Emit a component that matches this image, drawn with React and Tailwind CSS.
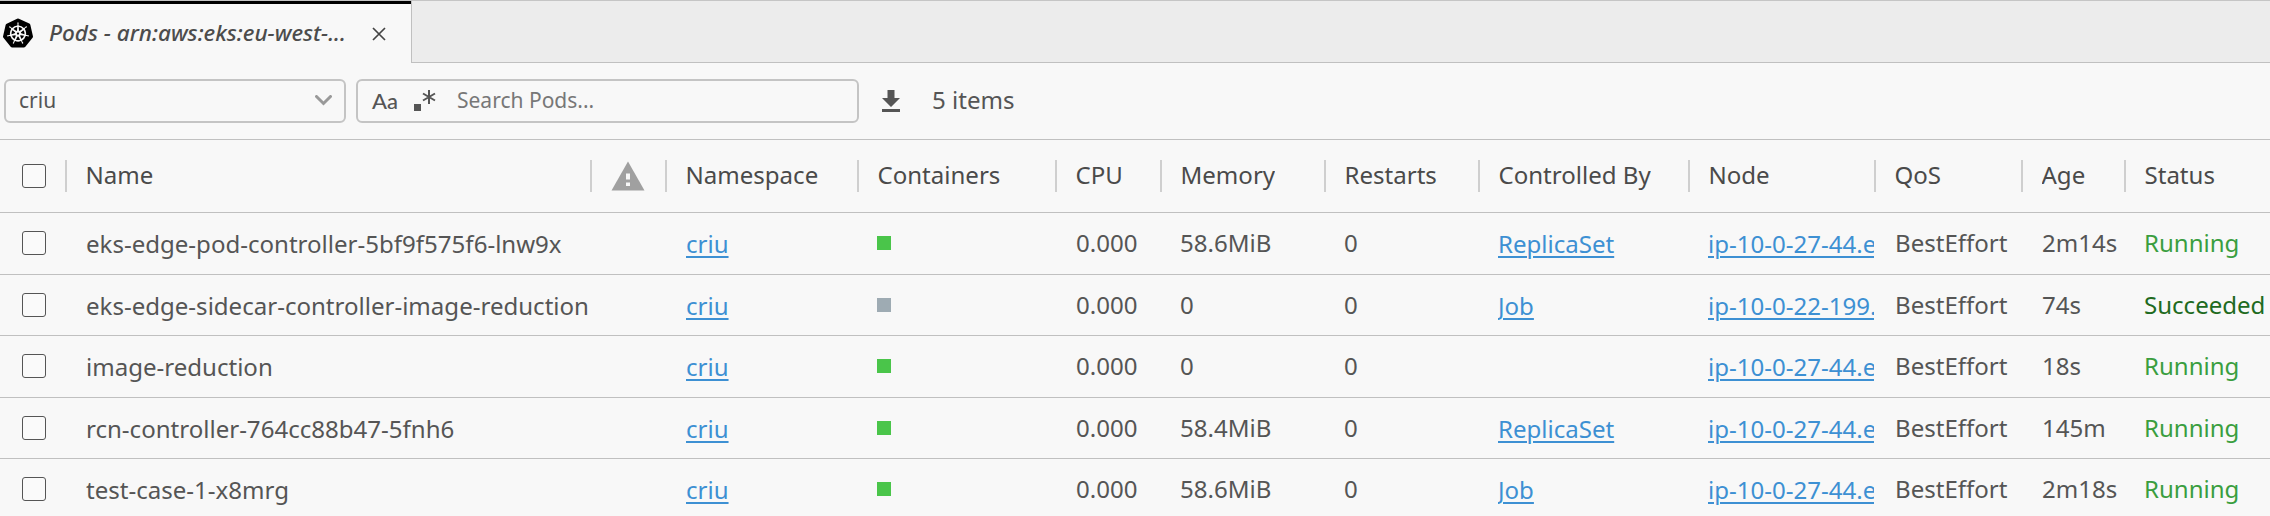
import React from "react";
import { SiKubernetes } from "react-icons/si";

const cell = "shrink-0 overflow-hidden whitespace-nowrap";

const GREEN = "bg-[#4ac54a]";
const GREY = "bg-[#9eabb3]";

const rows = [
  { name: "eks-edge-pod-controller-5bf9f575f6-lnw9x", dot: GREEN, mem: "58.6MiB", ctrl: "ReplicaSet", node: "ip-10-0-27-44.e", age: "2m14s", status: "Running" },
  { name: "eks-edge-sidecar-controller-image-reduction", dot: GREY, mem: "0", ctrl: "Job", node: "ip-10-0-22-199.", age: "74s", status: "Succeeded" },
  { name: "image-reduction", dot: GREEN, mem: "0", ctrl: "", node: "ip-10-0-27-44.e", age: "18s", status: "Running" },
  { name: "rcn-controller-764cc88b47-5fnh6", dot: GREEN, mem: "58.4MiB", ctrl: "ReplicaSet", node: "ip-10-0-27-44.e", age: "145m", status: "Running" },
  { name: "test-case-1-x8mrg", dot: GREEN, mem: "58.6MiB", ctrl: "Job", node: "ip-10-0-27-44.e", age: "2m18s", status: "Running" },
];

const headers = [
  { label: "Name", width: "w-[525px]" },
  { label: "warning", width: "w-[75px]" },
  { label: "Namespace", width: "w-[192px]" },
  { label: "Containers", width: "w-[198px]" },
  { label: "CPU", width: "w-[105px]" },
  { label: "Memory", width: "w-[164px]" },
  { label: "Restarts", width: "w-[154px]" },
  { label: "Controlled By", width: "w-[210px]", text: "w-[152px]" },
  { label: "Node", width: "w-[186px]" },
  { label: "QoS", width: "w-[147px]" },
  { label: "Age", width: "w-[103px]" },
  { label: "Status", width: "w-[145px]" },
];

function Checkbox() {
  return <span className="ml-[22px] h-6 w-6 shrink-0 rounded-[3px] border border-[#555] bg-[#fafafa]" />;
}

function Link({ children }) {
  return <a className="text-[#3d90d3] underline decoration-2 underline-offset-[3px]">{children}</a>;
}

function WarningIcon() {
  return (
    <svg className="shrink-0" width="34" height="30" viewBox="0 0 34 30">
      <path d="M17 0.5L33.5 29.5H0.5z" fill="#a0a0a0" />
      <path d="M15 12.5h4v6h-4zM15 21.5h4v3.5h-4z" fill="#f8f8f8" />
    </svg>
  );
}

function TabBar() {
  return (
    <div className="flex h-[63px] shrink-0 items-stretch border-t border-[#c5c5c5]">
      <div className="flex w-[411px] shrink-0 items-center border-t-[3px] border-black pb-[2px]">
        <SiKubernetes className="ml-[3px] h-[30px] w-[30px] shrink-0 text-black" />
        <span className="ml-4 w-[316px] shrink-0 whitespace-nowrap text-[22.5px] font-medium italic text-[#4c4c4c]">
          Pods - arn:aws:eks:eu-west-...
        </span>
        <svg className="mt-[2px] ml-[7px] shrink-0" width="14" height="14" viewBox="0 0 14 14" stroke="#444" strokeWidth="1.7" fill="none">
          <path d="M1 1l12 12M13 1L1 13" />
        </svg>
      </div>
      <div className="flex-1 border-b border-l border-[#c0c0c0] bg-[#ececec]" />
    </div>
  );
}

function Toolbar() {
  return (
    <div className="flex h-[77px] shrink-0 items-center border-b border-[#c0c0c0] pb-px">
      <div className="ml-1 flex h-[44px] w-[342px] shrink-0 items-center justify-between rounded-[6px] border-2 border-[#c4c4c4] pr-3 pl-[13px] text-[21px]">
        <span>criu</span>
        <svg width="17" height="11" viewBox="0 0 17 11" fill="none" stroke="#999" strokeWidth="3">
          <path d="M1.5 1.5l7 7 7-7" strokeLinecap="round" />
        </svg>
      </div>
      <div className="ml-[10px] flex h-[44px] w-[503px] shrink-0 items-center rounded-[6px] border-2 border-[#c4c4c4] pl-[14px]">
        <span className="w-[42px] font-['Lato',sans-serif] text-[22px] font-medium">Aa</span>
        <svg width="22" height="24" viewBox="0 0 22 24">
          <rect x="0" y="15" width="7" height="7" fill="#555" />
          <path d="M15 1v14M9 4.5l12 7M21 4.5l-12 7" stroke="#555" strokeWidth="2" />
        </svg>
        <span className="ml-[21px] text-[21px] text-[#777]">Search Pods...</span>
      </div>
      <svg className="ml-[22px] shrink-0" width="20" height="24" viewBox="0 0 20 24" fill="#555">
        <path d="M6.5 1h7v8h5.5L10 18 1 9h5.5zM1 20h18v3H1z" />
      </svg>
      <span className="ml-[31px] text-[24.1px]">5 items</span>
    </div>
  );
}

function HeaderRow() {
  return (
    <div className="flex h-[73px] shrink-0 items-center border-b border-[#c0c0c0] pb-px text-[#4a4a4a]">
      <Checkbox />
      <div className="ml-[19px] flex">
        {headers.map((h) => (
          <div key={h.label} className={`flex h-8 shrink-0 items-center border-l-2 border-[#cfcfcf] pl-[18.5px] ${h.width}`}>
            {h.label === "warning" ? <WarningIcon /> : <span className={`${cell} ${h.text || ""}`}>{h.label}</span>}
          </div>
        ))}
      </div>
    </div>
  );
}

function PodRow({ pod }) {
  return (
    <div className="flex h-[61.5px] shrink-0 items-center border-b border-[#c0c0c0]">
      <Checkbox />
      <span className={`${cell} mt-[2px] ml-10 w-[600px]`}>{pod.name}</span>
      <span className={`${cell} mt-[2px] w-[191px]`}><Link>criu</Link></span>
      <span className="w-[199px] shrink-0"><span className={`block h-[14px] w-[14px] ${pod.dot}`} /></span>
      <span className={`${cell} w-[104px]`}>0.000</span>
      <span className={`${cell} w-[164px]`}>{pod.mem}</span>
      <span className={`${cell} w-[154px]`}>0</span>
      <span className={`${cell} mt-[2px] w-[210px]`}><Link>{pod.ctrl}</Link></span>
      <span className={`${cell} mt-[2px] mr-[21px] w-[166px]`}><Link>{pod.node}</Link></span>
      <span className={`${cell} w-[147px]`}>BestEffort</span>
      <span className={`${cell} w-[102px]`}>{pod.age}</span>
      <span className={`${cell} ${pod.status === "Succeeded" ? "text-[#206a20]" : "text-[#3a9e3f]"}`}>{pod.status}</span>
    </div>
  );
}

export default function App() {
  return (
    <div className="flex h-[516px] w-[2270px] flex-col overflow-hidden bg-[#f8f8f8] font-['Noto_Sans',sans-serif] text-[24.05px] text-[#555]">
      <TabBar />
      <Toolbar />
      <HeaderRow />
      {rows.map((pod) => (
        <PodRow key={pod.name} pod={pod} />
      ))}
    </div>
  );
}
